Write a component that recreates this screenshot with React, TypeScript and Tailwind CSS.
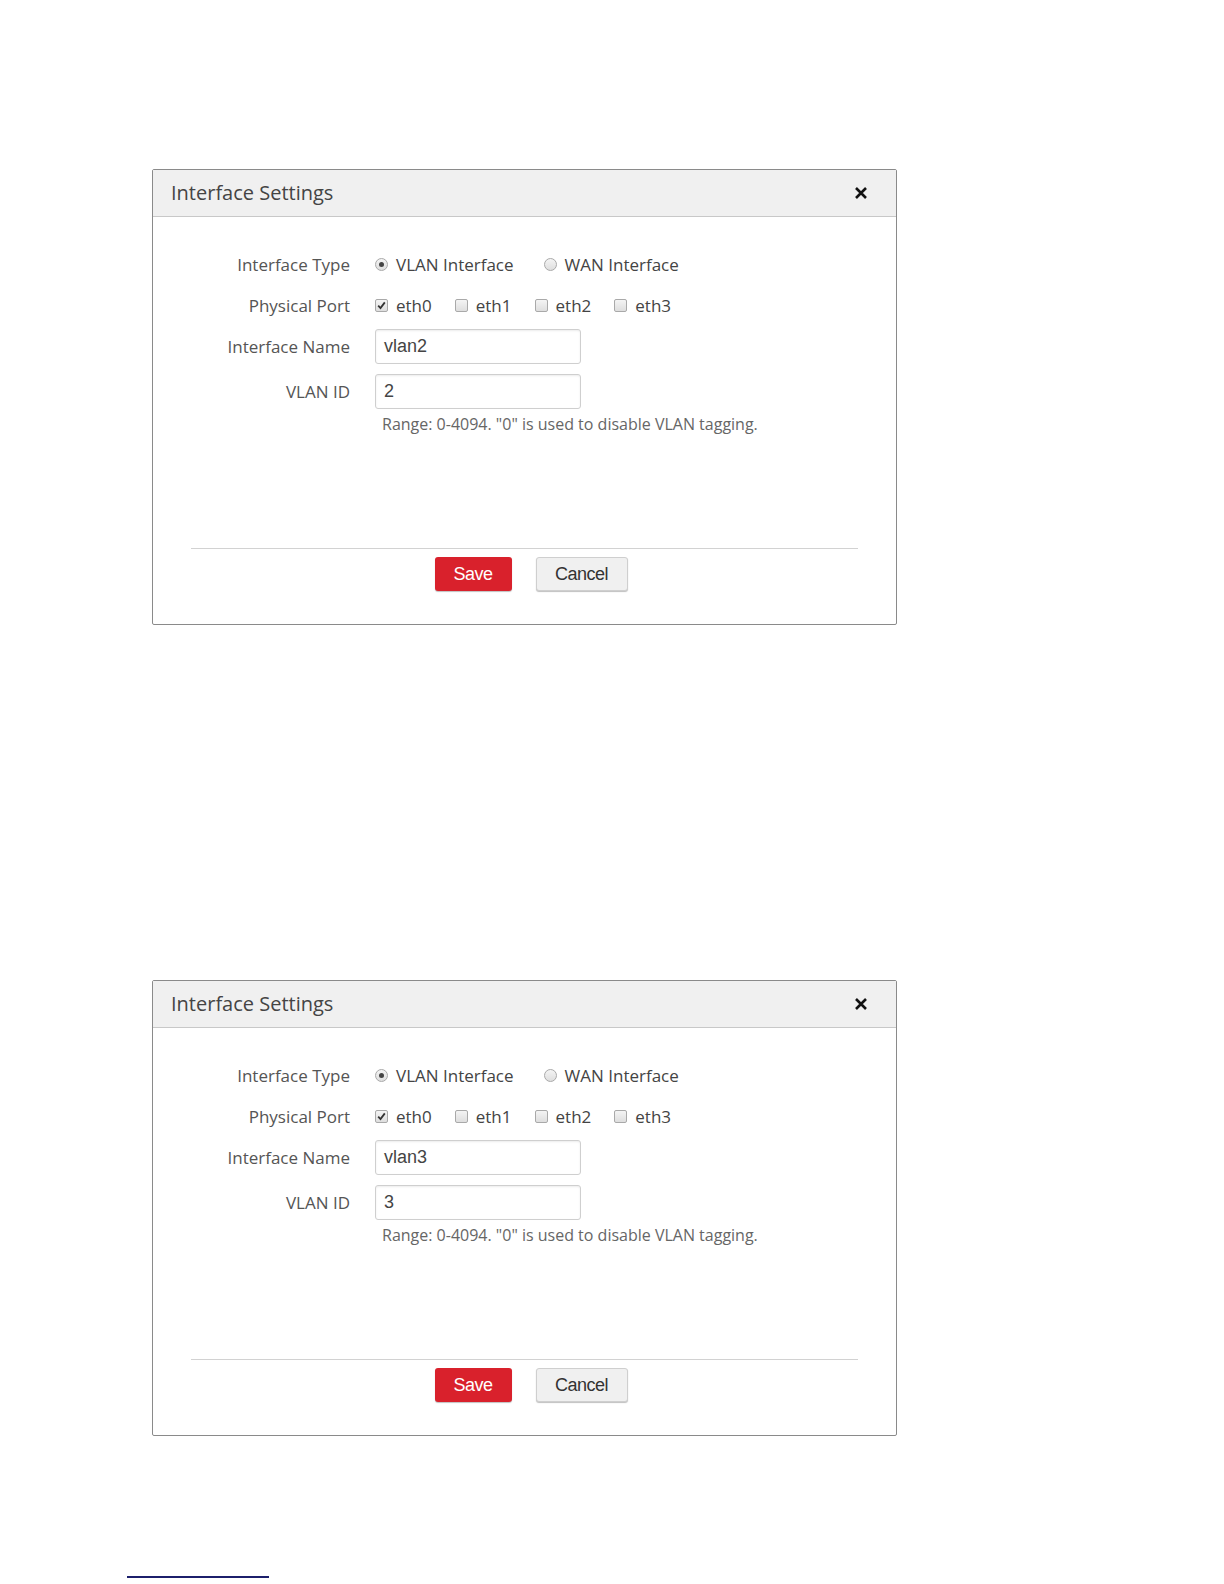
import React from 'react';

const uiFont = { fontFamily: '"Open Sans", "Noto Sans", sans-serif' };

function Radio({ checked, label }: { checked?: boolean; label: string }) {
  return (
    <label className="flex items-center">
      <span className="flex h-[13px] w-[13px] items-center justify-center rounded-full border border-[#a9a9a9] bg-gradient-to-b from-[#f4f4f4] to-[#dedede]">
        {checked && <span className="h-[5px] w-[5px] rounded-full bg-[#444]" />}
      </span>
      <span className="ml-[8px] text-[17px] text-[#444]">{label}</span>
    </label>
  );
}

function Checkbox({ checked, label }: { checked?: boolean; label: string }) {
  return (
    <label className="flex items-center">
      <span className="flex h-[13px] w-[13px] items-center justify-center rounded-[2px] border border-[#a9a9a9] bg-gradient-to-b from-[#f4f4f4] to-[#dedede]">
        {checked && (
          <svg width="9" height="9" viewBox="0 0 9 9">
            <path d="M1.2 4.6 L3.5 7 L7.8 1.4" fill="none" stroke="#333" strokeWidth="1.8" />
          </svg>
        )}
      </span>
      <span className="ml-[8px] text-[17px] text-[#444]">{label}</span>
    </label>
  );
}

function Row({ label, children, className }: { label: string; children: React.ReactNode; className?: string }) {
  return (
    <div className={`flex items-center ${className ?? ''}`}>
      <div className="w-[197px] text-right text-[17px] text-[#555]">{label}</div>
      <div className="ml-[25px] flex items-center">{children}</div>
    </div>
  );
}

function TextInput({ value }: { value: string }) {
  return (
    <div
      className="flex h-[35px] w-[206px] items-center rounded-[3px] border border-[#cfcfcf] bg-white px-[8px] text-[18px] text-[#444] shadow-[inset_0_1px_2px_rgba(0,0,0,0.08)]"
      style={{ fontFamily: '"Liberation Sans", Arial, sans-serif' }}
    >
      {value}
    </div>
  );
}

function InterfaceDialog({ name, id }: { name: string; id: string }) {
  return (
    <div className="ml-[152px] h-[456px] w-[745px] rounded-[2px] border border-[#8a8a8a] bg-white" style={uiFont}>
      {/* header */}
      <div className="flex h-[47px] items-center justify-between border-b border-[#c8c8c8] bg-[#f0f0f0] pl-[18px] pr-[28px]">
        <span className="text-[20px] text-[#444]">Interface Settings</span>
        <svg width="14" height="14" viewBox="0 0 14 14">
          <path d="M2 2 L12 12 M12 2 L2 12" stroke="#111" strokeWidth="2.6" />
        </svg>
      </div>

      {/* body */}
      <div className="pt-[27px]">
        <Row label="Interface Type" className="h-[41px]">
          <Radio checked label="VLAN Interface" />
          <div className="ml-[30px]">
            <Radio label="WAN Interface" />
          </div>
        </Row>
        <Row label="Physical Port" className="h-[41px]">
          <div className="flex gap-[23px]">
            <Checkbox checked label="eth0" />
            <Checkbox label="eth1" />
            <Checkbox label="eth2" />
            <Checkbox label="eth3" />
          </div>
        </Row>
        <Row label="Interface Name" className="mt-[3px]">
          <TextInput value={name} />
        </Row>
        <Row label="VLAN ID" className="mt-[10px]">
          <TextInput value={id} />
        </Row>
        <div className="ml-[229px] mt-[5px] h-[20px] text-[16px] leading-[20px] text-[#666]">
          Range: 0-4094. "0" is used to disable VLAN tagging.
        </div>
      </div>

      {/* footer */}
      <div className="mx-[38px] mt-[114px] border-t border-[#d2d2d2]" />
      <div
        className="flex justify-center gap-[24px] pl-[13px] pt-[8px]"
        style={{ fontFamily: '"Liberation Sans", Arial, sans-serif' }}
      >
        <button className="h-[34px] w-[77px] rounded-[3px] bg-[#d9212c] text-[18px] tracking-[-0.5px] text-white shadow-[0_1px_1px_rgba(0,0,0,0.25)]">
          Save
        </button>
        <button className="h-[34px] w-[92px] rounded-[3px] border border-[#cfcfcf] bg-[#f0f0f0] text-[18px] tracking-[-0.5px] text-[#333] shadow-[0_1px_1px_rgba(0,0,0,0.25)]">
          Cancel
        </button>
      </div>
    </div>
  );
}

export default function App() {
  return (
    <div className="flex min-h-[1584px] w-full flex-col bg-white pt-[169px]">
      <InterfaceDialog name="vlan2" id="2" />
      <div className="mt-[355px]">
        <InterfaceDialog name="vlan3" id="3" />
      </div>
      <div className="ml-[127px] mt-[140px] h-[2px] w-[142px] bg-[#1c1f6b]" />
    </div>
  );
}
